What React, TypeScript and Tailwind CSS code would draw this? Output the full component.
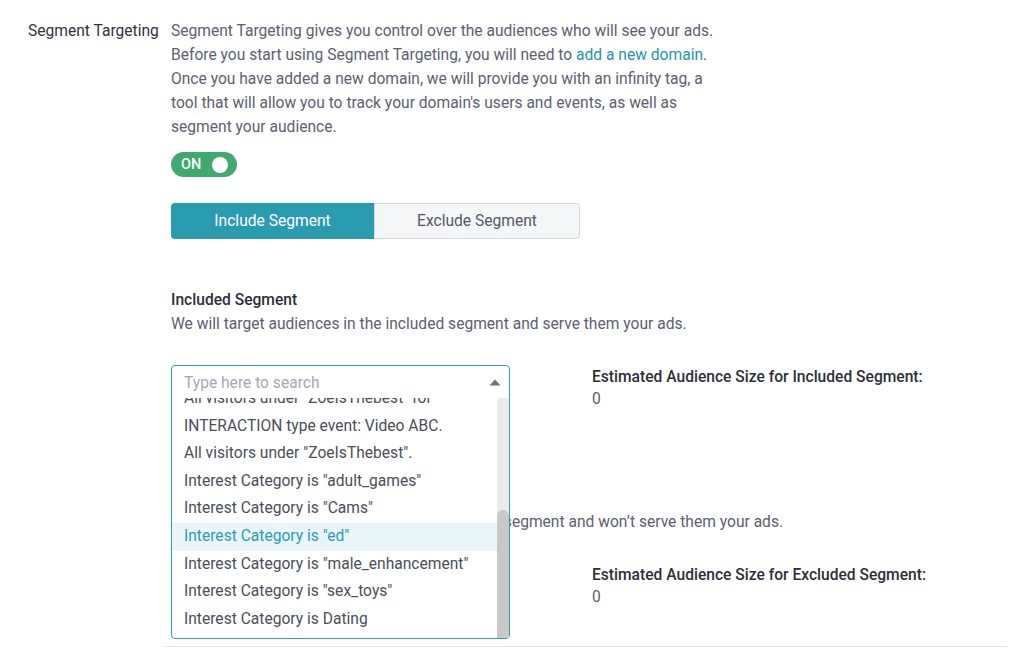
import React from "react";

const options = [
  'All visitors under "ZoeIsThebest" for',
  "INTERACTION type event: Video ABC.",
  'All visitors under "ZoeIsThebest".',
  'Interest Category is "adult_games"',
  'Interest Category is "Cams"',
  'Interest Category is "ed"',
  'Interest Category is "male_enhancement"',
  'Interest Category is "sex_toys"',
  "Interest Category is Dating",
];

function Estimate({ label }: { label: string }) {
  return (
    <div className="mt-[2px] flex flex-col">
      <span className="text-[15.6px] leading-5 font-medium text-[#2c2f38]">{label}</span>
      <span className="text-[15.6px] leading-6 text-[#5c6070]">0</span>
    </div>
  );
}

function SegmentSelect({ open }: { open?: boolean }) {
  return (
    <div className="relative w-[339px] h-[36px] shrink-0">
      {open && (
        <div className="absolute left-0 top-0 z-10 flex h-[274px] w-full flex-col rounded-[4px] border border-[#2a9db0] bg-white">
          <div className="flex h-[32px] shrink-0 items-center justify-between pl-[12px] pr-[8px] pt-[3px]">
            <span className="text-[15.6px] text-[#a3a8b6]">Type here to search</span>
            <svg width="12" height="7" viewBox="0 0 12 7" className="mt-[-2px]">
              <path d="M6 0.5 L11.5 6.5 L0.5 6.5 Z" fill="#6c7182" />
            </svg>
          </div>
          <div className="flex min-h-0 flex-1">
            <div className="flex-1 overflow-hidden">
              <div className="-mt-[13px]">
                {options.map((o, i) => (
                  <div
                    key={o}
                    className={
                      i === 5
                        ? "flex h-[27.6px] items-center bg-[#e8f5f9] pl-[12px] text-[15.6px] text-[#2a9db0] whitespace-nowrap"
                        : "flex h-[27.6px] items-center pl-[12px] text-[15.6px] text-[#4a4e5a] whitespace-nowrap"
                    }
                  >
                    {o}
                  </div>
                ))}
              </div>
            </div>
            <div className="flex w-[12px] flex-col rounded-t-[4px] bg-[#ebebeb] pt-[112px]">
              <div className="flex-1 rounded-t-[6px] bg-[#c8c8c8]" />
            </div>
          </div>
        </div>
      )}
    </div>
  );
}

export default function App() {
  return (
    <div className="min-h-screen bg-white font-['Roboto','Liberation_Sans',sans-serif]">
      <div className="flex pl-[28px] pt-[19px]">
        <div className="w-[143px] shrink-0 text-[15.6px] leading-6 text-[#2f3340]">Segment Targeting</div>
        <div className="flex flex-col">
          <p className="w-[552px] text-[15.6px] leading-6 text-[#5c6070]">
            Segment Targeting gives you control over the audiences who will see your ads. Before you start using
            Segment Targeting, you will need to <span className="text-[#1f95a8]">add a new domain</span>. Once you
            have added a new domain, we will provide you with an infinity tag, a tool that will allow you to track
            your domain's users and events, as well as segment your audience.
          </p>

          <div className="mt-[13px] flex h-[25px] w-[66px] items-center justify-between rounded-full bg-[#40a96d] pl-[10px] pr-[9px]">
            <span className="text-[14.5px] font-medium text-white">ON</span>
            <span className="h-[16px] w-[16px] rounded-full bg-white" />
          </div>

          <div className="mt-[26px] flex h-[36px] w-[409px]">
            <div className="flex w-[203px] items-center justify-center rounded-l-[4px] bg-[#2a9cb0] pt-[2px] text-[15.6px] text-white">
              Include Segment
            </div>
            <div className="flex flex-1 items-center justify-center rounded-r-[4px] border border-[#d2d5da] bg-[#f5f6f7] pt-[2px] text-[15.6px] text-[#535866]">
              Exclude Segment
            </div>
          </div>

          <div className="mt-[51px] text-[15.6px] leading-5 font-medium text-[#2c2f38]">Included Segment</div>
          <p className="mt-[2px] text-[15.6px] leading-6 text-[#5c6070]">
            We will target audiences in the included segment and serve them your ads.
          </p>
          <div className="mt-[29px] flex h-[46px] gap-[82px]">
            <SegmentSelect open />
            <Estimate label="Estimated Audience Size for Included Segment:" />
          </div>

          <div className="mt-[77px] text-[15.6px] leading-5 font-medium text-[#2c2f38]">Excluded Segment</div>
          <p className="mt-[2px] text-[15.6px] leading-6 text-[#5c6070]">
            We will not target the audiences in the excluded segment and won’t serve them your ads.
          </p>
          <div className="mt-[29px] flex h-[46px] gap-[82px]">
            <SegmentSelect />
            <Estimate label="Estimated Audience Size for Excluded Segment:" />
          </div>
        </div>
      </div>
      <div className="ml-[165px] mr-[19px] mt-[37px] h-px bg-[#e2e4e8]" />
    </div>
  );
}
